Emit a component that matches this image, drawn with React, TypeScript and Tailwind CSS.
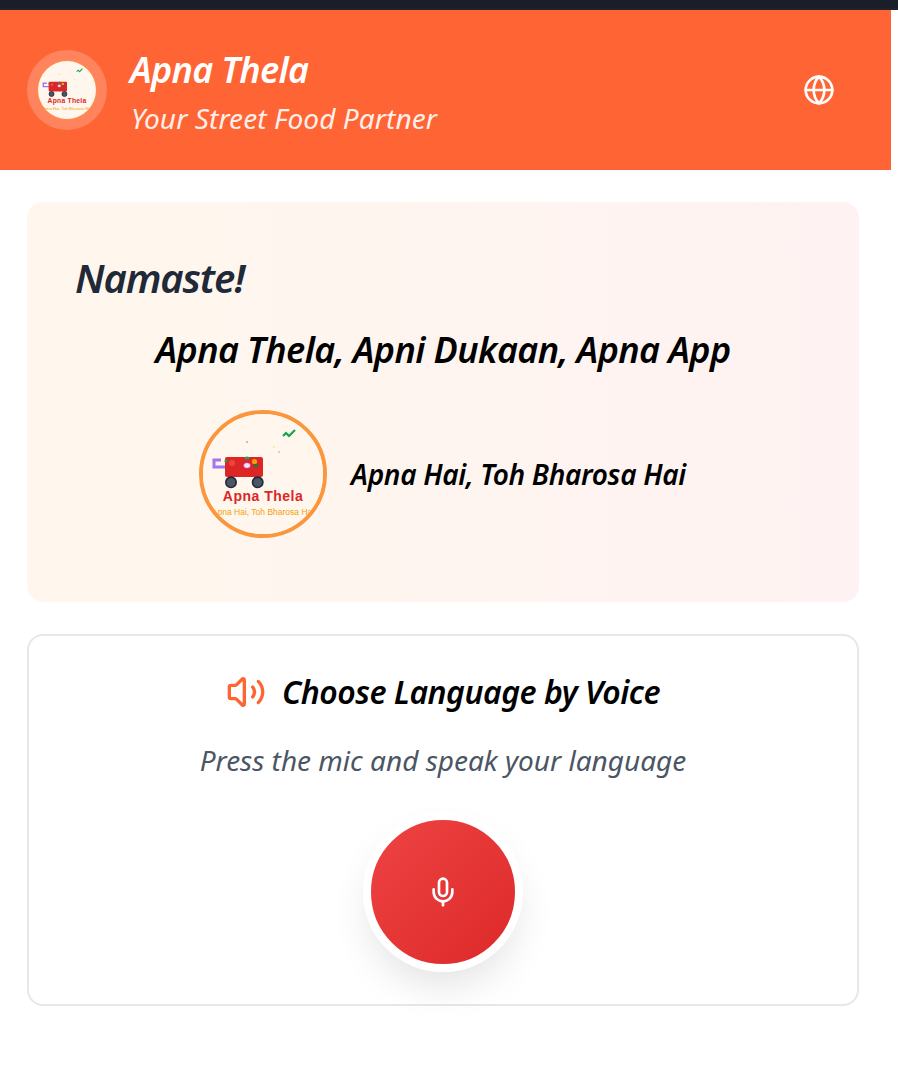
import { Globe, Mic, Volume2 } from "lucide-react"

const Logo = () => (
    <svg viewBox="0 0 120 120" className="block h-full w-full not-italic">
        <rect width="120" height="120" fill="#fff7ed" />
        <path d="M80 22l3-3 3 3 6-6" fill="none" stroke="#16a34a" strokeWidth="2.2" />
        <circle cx="44" cy="28" r="1" fill="#86c99a" />
        <circle cx="70.7" cy="33" r="1" fill="#fde68a" />
        <circle cx="76" cy="38" r="1" fill="#fdba74" />
        <path d="M18 46h-7v7h13" fill="none" stroke="#9f75f0" strokeWidth="3" />
        <rect x="22" y="43" width="38" height="20" rx="2" fill="#dc2626" />
        <circle cx="29" cy="49" r="3" fill="#ef4444" />
        <circle cx="23" cy="47" r="1.6" fill="#22a04a" />
        <ellipse cx="44" cy="51.5" rx="3.4" ry="2.8" fill="#f5e1f5" stroke="#c026d3" strokeWidth="0.5" />
        <ellipse cx="44" cy="44" rx="2.6" ry="1.5" fill="#22a04a" />
        <circle cx="51.5" cy="47.5" r="2.6" fill="#f59e0b" />
        <ellipse cx="53" cy="51.5" rx="2.5" ry="1.4" fill="#15803d" />
        <circle cx="28" cy="68.3" r="5.2" fill="#4b5563" stroke="#1f2937" strokeWidth="1.6" />
        <circle cx="54.7" cy="68.3" r="5.2" fill="#4b5563" stroke="#1f2937" strokeWidth="1.6" />
        <text x="60" y="87" textAnchor="middle" fontSize="14" letterSpacing="0.5" fontWeight="700" fill="#dc2626" fontFamily="'Liberation Sans', sans-serif">Apna Thela</text>
        <text x="60" y="101" textAnchor="middle" fontSize="8.5" fill="#f59e0b" fontFamily="'Liberation Sans', sans-serif">Apna Hai, Toh Bharosa Hai</text>
    </svg>
)

export default function App() {
    return (
        <div className="min-h-[1079px] bg-white font-['Noto_Sans',sans-serif] italic">
            <div className="h-[10px] border-b-2 border-[#1f232c] bg-[#1a1e28]" />
            <div className="w-[891px]">
                <header className="flex h-[160px] items-center justify-between bg-[#ff6534] pl-[27px] pr-[56px] text-white">
                    <div className="flex items-center gap-[23px]">
                        <div className="h-[80px] w-[80px] rounded-full bg-white/20 p-[10px]">
                            <div className="h-[60px] w-[60px] overflow-hidden rounded-full border border-[#fb923c]">
                                <Logo />
                            </div>
                        </div>
                        <div className="pt-[8px]">
                            <h1 className="text-[36px] font-semibold leading-[40px] tracking-[-0.7px]">Apna Thela</h1>
                            <p className="ml-[1px] mt-[8px] text-[28px] leading-[40px] tracking-[0.1px] opacity-90">Your Street Food Partner</p>
                        </div>
                    </div>
                    <Globe size={32} />
                </header>

                <main className="flex flex-col gap-[32px] pl-[27px] pr-[32px] pt-[32px]">
                    <section className="h-[400px] rounded-2xl bg-gradient-to-r from-[#fff7ed] to-[#fef2f2] p-[48px]">
                        <h2 className="text-[40px] font-semibold leading-[56px] tracking-[-1.1px] text-[#1f2937]">Namaste!</h2>
                        <p className="mt-[20px] text-center text-[36px] font-semibold leading-[48px] tracking-[-0.6px] text-black">Apna Thela, Apni Dukaan, Apna App</p>
                        <div className="mt-[36px] flex items-center justify-center gap-[24px] pr-[1px]">
                            <div className="h-[128px] w-[128px] overflow-hidden rounded-full border-4 border-[#fb963c]">
                                <Logo />
                            </div>
                            <p className="text-[28px] font-semibold leading-[36px] tracking-[-0.3px] text-black">Apna Hai, Toh Bharosa Hai</p>
                        </div>
                    </section>

                    <section className="flex h-[372px] flex-col items-center rounded-2xl border-2 border-[#e5e7eb] pt-[32px]">
                        <div className="flex items-center gap-[16px]">
                            <Volume2 size={40} className="text-[#ff6534]" />
                            <h3 className="text-[32px] font-semibold leading-[48px] tracking-[-0.5px] text-black">Choose Language by Voice</h3>
                        </div>
                        <p className="mt-[25px] text-[28px] leading-[38px] text-[#4b5563]">Press the mic and speak your language</p>
                        <button className="mt-[33px] flex h-[160px] w-[160px] items-center justify-center rounded-full border-8 border-white bg-gradient-to-br from-[#ef4444] to-[#dc2626] bg-origin-border text-white shadow-[0_20px_40px_-8px_rgba(0,0,0,0.12)]">
                            <Mic size={32} />
                        </button>
                    </section>
                </main>
            </div>
        </div>
    )
}
